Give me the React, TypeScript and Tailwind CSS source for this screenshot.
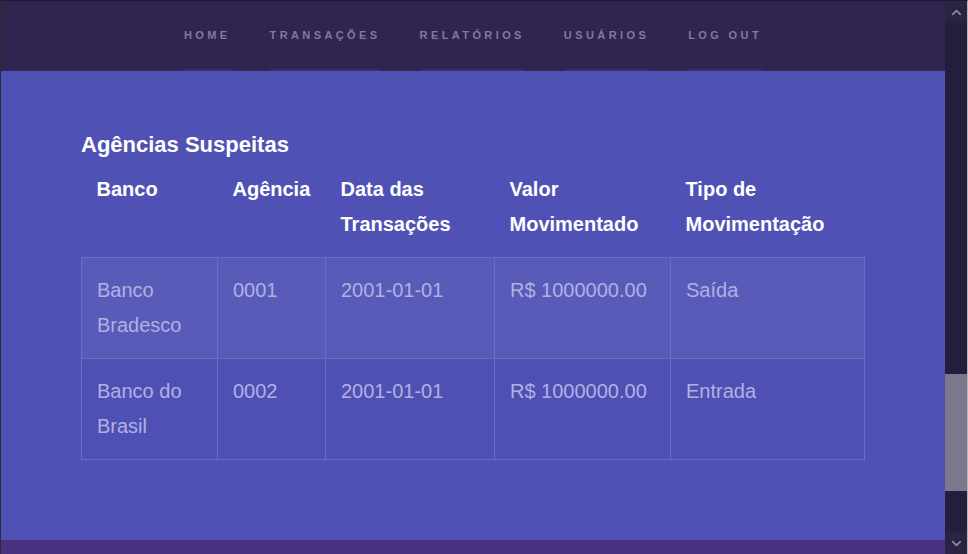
import { ChevronDown, ChevronUp } from "lucide-react";

const links = ["Home", "Transações", "Relatórios", "Usuários", "Log out"];

const rows = [
  { banco: "Banco Bradesco", agencia: "0001", data: "2001-01-01", valor: "R$ 1000000.00", tipo: "Saída" },
  { banco: "Banco do Brasil", agencia: "0002", data: "2001-01-01", valor: "R$ 1000000.00", tipo: "Entrada" },
];

function Scrollbar() {
  return (
    <div className="w-[22px] flex flex-col bg-[#241d3d]">
      <div className="h-[22px] flex items-center justify-center bg-[#2a2343] text-[#8a8499]">
        <ChevronUp size={15} strokeWidth={3} />
      </div>
      <div className="flex-1 flex flex-col">
        <div className="h-[351px]" />
        <div className="h-[117px] bg-[#7e788c]" />
      </div>
      <div className="h-[22px] flex items-center justify-center bg-[#2a2343] text-[#8a8499]">
        <ChevronDown size={15} strokeWidth={3} />
      </div>
    </div>
  );
}

export default function App() {
  return (
    <div
      className="w-[968px] h-[554px] flex border-t border-l border-r border-t-[#142029] border-l-[#2c2c34] border-r-[#b5b5b5] overflow-hidden"
      style={{ fontFamily: '"Liberation Sans", Arial, sans-serif' }}
    >
      <div className="flex-1 flex flex-col">
        {/* barra de navegação */}
        <nav className="h-[70px] bg-[#31244f] flex justify-center gap-[39px]">
          {links.map((l) => (
            <div key={l} className="flex flex-col justify-between">
              <div className="h-[68px] flex items-center pt-[1px]">
                <span className="uppercase text-[11px] font-bold tracking-[3.4px] text-[#83799a]">{l}</span>
              </div>
              <div className="h-[2px] bg-[#3a2d68]" />
            </div>
          ))}
        </nav>

        <main className="flex-1 bg-[#4f52b4] px-20 pt-[62px]">
          <h2 className="text-[22px] leading-[24px] font-bold text-white">Agências Suspeitas</h2>
          <table className="w-full table-fixed border-collapse">
            <colgroup>
              <col className="w-[136px]" />
              <col className="w-[108px]" />
              <col className="w-[169px]" />
              <col className="w-[176px]" />
              <col />
            </colgroup>
            <thead>
              <tr>
                {["Banco", "Agência", "Data das Transações", "Valor Movimentado", "Tipo de Movimentação"].map((h) => (
                  <th key={h} className="text-left align-top px-[15px] py-[15px] text-[20px] leading-[35px] font-bold text-white">
                    {h}
                  </th>
                ))}
              </tr>
            </thead>
            <tbody>
              {rows.map((r, i) => (
                <tr key={i} className={i === 0 ? "bg-[#595bb9]" : "bg-[#4e51b3]"}>
                  {[r.banco, r.agencia, r.data, r.valor, r.tipo].map((v, j) => (
                    <td
                      key={j}
                      className="align-top border border-[#6b6ec7] px-[15px] py-[15px] text-[20px] leading-[35px] text-[#b1b0e3]"
                    >
                      {v}
                    </td>
                  ))}
                </tr>
              ))}
            </tbody>
          </table>
        </main>

        <div className="h-[14px] bg-[#4a3283]" />
      </div>
      <Scrollbar />
    </div>
  );
}
